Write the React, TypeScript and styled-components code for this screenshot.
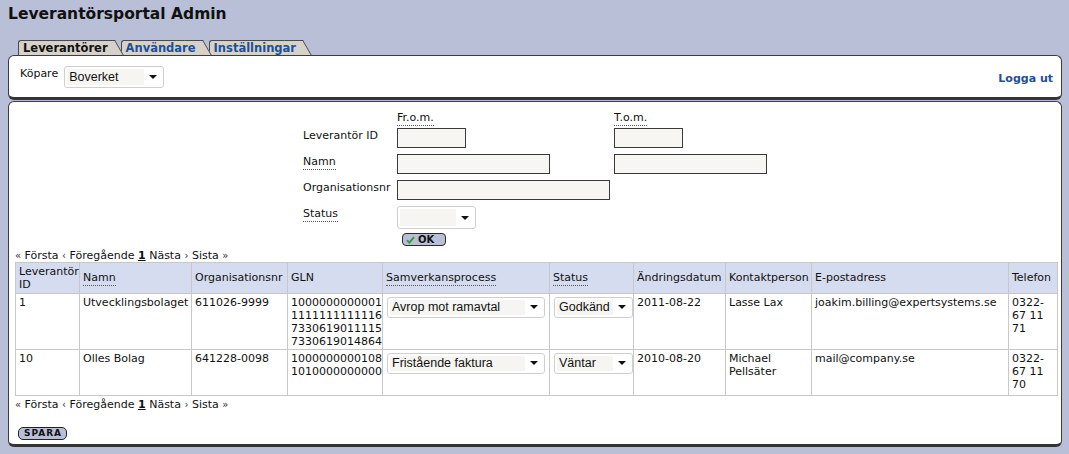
import React from "react";
import styled, { createGlobalStyle } from "styled-components";

const GlobalStyle = createGlobalStyle`
  html, body { margin: 0; padding: 0; }
  body {
    background: #b9bfd6;
    font-family: "DejaVu Sans", Verdana, sans-serif;
    font-size: 11px;
    color: #111;
  }
`;

const Page = styled.div`
  padding: 5px 7px 0 8px;
  height: 454px;
  box-sizing: border-box;
`;

const Title = styled.h1`
  margin: 0;
  font-size: 15.5px;
  font-weight: bold;
  line-height: 19px;
  color: #111;
`;

const TabList = styled.div`
  display: flex;
  margin-top: 16px;
  padding-left: 10px;
  height: 15px;
`;

const Tab = styled.div<{ $active?: boolean; $z: number }>`
  position: relative;
  z-index: ${(p) => p.$z};
  height: 15px;
  box-sizing: border-box;
  padding: 0 3px 0 4px;
  margin-right: 10px;
  background: #d6d2ca;
  border-top: 1px solid #4a4a4a;
  border-left: 1px solid #4a4a4a;
  border-radius: 3px 0 0 0;
  font-size: 11.5px;
  font-weight: bold;
  line-height: 14px;
  color: ${(p) => (p.$active ? "#111" : "#1d4f9c")};
  white-space: nowrap;
  span { position: relative; z-index: 2; }
  &::after {
    content: "";
    position: absolute;
    top: -1px;
    bottom: 0;
    right: -4px;
    width: 18px;
    background: #d6d2ca;
    border-top: 1px solid #4a4a4a;
    border-right: 1px solid #4a4a4a;
    transform: skewX(30deg);
    transform-origin: top;
  }
`;

const Panel = styled.div`
  background: #fff;
  border: 1px solid #3c3c3c;
  border-bottom: 3px solid #333;
  border-radius: 6px;
`;

const HeaderPanel = styled(Panel)`
  position: relative;
  z-index: 5;
  display: flex;
  align-items: center;
  justify-content: space-between;
  height: 45px;
  box-sizing: border-box;
  padding: 0 8px 0 11px;
`;

const BuyerGroup = styled.div`
  display: flex;
  align-items: flex-start;
  gap: 6px;
  margin-top: 1px;
`;

const BuyerLabel = styled.span`
  padding-top: 1px;
`;

const Logout = styled.span`
  font-weight: bold;
  color: #1d4f9c;
  margin-top: 4px;
`;

const MainPanel = styled(Panel)`
  margin-top: 1px;
  padding: 8px 5px 4px 5px;
  height: 346px;
  box-sizing: border-box;
`;

const FormGrid = styled.div`
  display: grid;
  grid-template-columns: 94px 217px 153px;
  grid-auto-rows: auto;
  row-gap: 6px;
  justify-content: center;
`;

const ColHead = styled.div`
  padding-top: 1px;
  height: 14px;
  margin-bottom: -3px;
`;

const Dotted = styled.span`
  border-bottom: 1px dotted #555;
  padding-bottom: 1px;
`;

const FormLabel = styled.div`
  padding-top: 1px;
`;

const TextInput = styled.div<{ $w: number }>`
  width: ${(p) => p.$w}px;
  height: 20px;
  box-sizing: border-box;
  background: #f7f6f2;
  border: 1px solid #3a3a3a;
`;

const SelectBox = styled.div<{ $w: number; $h: number }>`
  display: inline-flex;
  align-items: stretch;
  width: ${(p) => p.$w}px;
  height: ${(p) => p.$h}px;
  box-sizing: border-box;
  padding: 2px;
  background: #fff;
  border: 1px solid #cfcfcf;
  border-radius: 3px;
`;

const SelectValue = styled.div`
  flex: 1;
  display: flex;
  align-items: center;
  padding-left: 2px;
  background: #f6f5f2;
  font-family: "Liberation Sans", Arial, sans-serif;
  font-size: 12.5px;
  color: #111;
  white-space: nowrap;
  overflow: hidden;
`;

const ArrowBox = styled.div`
  width: 17px;
  display: flex;
  align-items: center;
  justify-content: center;
`;

const OkButton = styled.div`
  display: inline-flex;
  align-items: center;
  gap: 3px;
  width: 44px;
  height: 13px;
  box-sizing: border-box;
  margin-left: 5px;
  padding-left: 3px;
  background: #b9bfd6;
  border: 1px solid #2a2a2a;
  border-radius: 4px;
  font-size: 10px;
  font-weight: bold;
  line-height: 11px;
`;

const OkCell = styled.div`
  grid-column: 2;
  margin-top: -2px;
`;

const Pager = styled.div`
  margin: 2px 0 0 1px;
  line-height: 13px;
  color: #111;
  b { text-decoration: underline; }
`;

const Sym = styled.span`
  font-size: 10px;
  color: #333;
`;

const Table = styled.table`
  width: 1042px;
  margin-left: 1px;
  border-collapse: collapse;
  table-layout: fixed;
`;

const BodyRow = styled.tr`
  height: 46px;
`;

const Th = styled.th`
  background: #d6dcf0;
  border: 1px solid #c8c8c8;
  font-weight: normal;
  text-align: left;
  vertical-align: middle;
  padding: 2px 1px 2px 3px;
  line-height: 13px;
  height: 26px;
  white-space: normal;
`;

const Td = styled.td<{ $pad?: boolean }>`
  border: 1px solid #c8c8c8;
  vertical-align: top;
  padding: ${(p) => (p.$pad ? "3px 1px 1px 4px" : "2px 1px 1px 3px")};
  line-height: 13px;
`;

const SaveButton = styled.div`
  display: inline-flex;
  align-items: center;
  justify-content: center;
  width: 49px;
  height: 13px;
  box-sizing: border-box;
  margin: 16px 0 0 4px;
  padding-left: 1px;
  background: #b9bfd6;
  border: 1px solid #222;
  border-radius: 5px;
  font-size: 9px;
  font-weight: bold;
  letter-spacing: 1px;
  line-height: 10px;
`;

const Arrow = () => (
  <svg width="8" height="4" viewBox="0 0 8 4">
    <path d="M0 0 H8 L4 4 Z" fill="#111" />
  </svg>
);

const Select = ({ value, w, h }: { value?: string; w: number; h: number }) => (
  <SelectBox $w={w} $h={h}>
    <SelectValue>{value}</SelectValue>
    <ArrowBox>
      <Arrow />
    </ArrowBox>
  </SelectBox>
);

const PagerLine = () => (
  <Pager>
    <Sym>«</Sym> Första <Sym>‹</Sym> Föregående <b>1</b> Nästa <Sym>›</Sym> Sista <Sym>»</Sym>
  </Pager>
);

const cols = [64, 112, 96, 95, 167, 84, 92, 86, 197, 49];

type Row = {
  id: string;
  name: string;
  org: string;
  gln: string[];
  process: string;
  status: string;
  date: string;
  contact: string;
  email: string;
  phone: string;
};

const rows: Row[] = [
  {
    id: "1",
    name: "Utvecklingsbolaget",
    org: "611026-9999",
    gln: ["1000000000001", "1111111111116", "7330619011115", "7330619014864"],
    process: "Avrop mot ramavtal",
    status: "Godkänd",
    date: "2011-08-22",
    contact: "Lasse Lax",
    email: "joakim.billing@expertsystems.se",
    phone: "0322-67 11 71",
  },
  {
    id: "10",
    name: "Olles Bolag",
    org: "641228-0098",
    gln: ["1000000000108", "1010000000000"],
    process: "Fristående faktura",
    status: "Väntar",
    date: "2010-08-20",
    contact: "Michael Pellsäter",
    email: "mail@company.se",
    phone: "0322-67 11 70",
  },
];

export default function App() {
  return (
    <>
      <GlobalStyle />
      <Page>
        <Title>Leverantörsportal Admin</Title>
        <TabList>
          <Tab $active $z={3}>
            <span>Leverantörer</span>
          </Tab>
          <Tab $z={2}>
            <span>Användare</span>
          </Tab>
          <Tab $z={1}>
            <span>Inställningar</span>
          </Tab>
        </TabList>
        <HeaderPanel>
          <BuyerGroup>
            <BuyerLabel>Köpare</BuyerLabel>
            <Select value="Boverket" w={100} h={22} />
          </BuyerGroup>
          <Logout>Logga ut</Logout>
        </HeaderPanel>
        <MainPanel>
          <FormGrid>
            <div />
            <ColHead>
              <Dotted>Fr.o.m.</Dotted>
            </ColHead>
            <ColHead>
              <Dotted>T.o.m.</Dotted>
            </ColHead>

            <FormLabel>Leverantör ID</FormLabel>
            <TextInput $w={69} />
            <TextInput $w={69} />

            <FormLabel>
              <Dotted>Namn</Dotted>
            </FormLabel>
            <TextInput $w={153} />
            <TextInput $w={153} />

            <FormLabel>Organisationsnr</FormLabel>
            <TextInput $w={213} />
            <div />

            <FormLabel>
              <Dotted>Status</Dotted>
            </FormLabel>
            <Select w={79} h={23} />
            <div />

            <OkCell>
              <OkButton>
                <svg width="9" height="8" viewBox="0 0 9 8">
                  <path d="M1 4.2 L3.4 6.6 L8 1.2" stroke="#3c9a3c" strokeWidth="2" fill="none" />
                </svg>
                OK
              </OkButton>
            </OkCell>
          </FormGrid>

          <PagerLine />
          <Table>
            <colgroup>
              {cols.map((w, i) => (
                <col key={i} style={{ width: w }} />
              ))}
            </colgroup>
            <thead>
              <tr>
                <Th>Leverantör ID</Th>
                <Th>
                  <Dotted>Namn</Dotted>
                </Th>
                <Th>Organisationsnr</Th>
                <Th>GLN</Th>
                <Th>
                  <Dotted>Samverkansprocess</Dotted>
                </Th>
                <Th>
                  <Dotted>Status</Dotted>
                </Th>
                <Th>Ändringsdatum</Th>
                <Th>Kontaktperson</Th>
                <Th>E-postadress</Th>
                <Th>Telefon</Th>
              </tr>
            </thead>
            <tbody>
              {rows.map((r) => (
                <BodyRow key={r.id}>
                  <Td>{r.id}</Td>
                  <Td>{r.name}</Td>
                  <Td>{r.org}</Td>
                  <Td>
                    {r.gln.map((g) => (
                      <div key={g}>{g}</div>
                    ))}
                  </Td>
                  <Td $pad>
                    <Select value={r.process} w={158} h={21} />
                  </Td>
                  <Td $pad>
                    <Select value={r.status} w={79} h={21} />
                  </Td>
                  <Td>{r.date}</Td>
                  <Td>{r.contact}</Td>
                  <Td>{r.email}</Td>
                  <Td>{r.phone}</Td>
                </BodyRow>
              ))}
            </tbody>
          </Table>
          <PagerLine />
          <SaveButton>SPARA</SaveButton>
        </MainPanel>
      </Page>
    </>
  );
}
